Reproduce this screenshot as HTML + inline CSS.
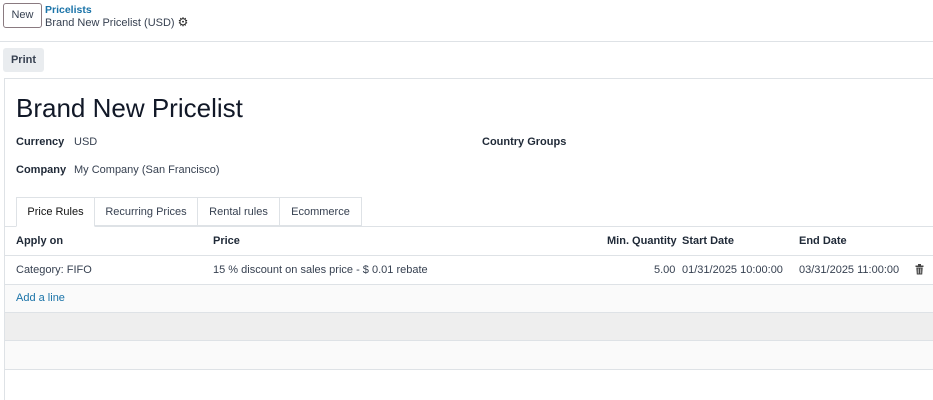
<!DOCTYPE html>
<html><head><style>
*{box-sizing:border-box;margin:0;padding:0}
body{width:933px;height:400px;overflow:hidden;background:#fff;font-family:"Liberation Sans","DejaVu Sans",sans-serif;font-size:11px;color:#374151;position:relative}
.a{position:absolute;white-space:nowrap}
b{font-weight:bold;color:#1f2937}
</style></head><body>
<div class="a" style="left:3px;top:3px;width:39px;height:25px;border:1px solid #8a7a80;border-radius:3px;text-align:center;line-height:23px;font-size:11px;color:#374151">New</div>
<div class="a" style="left:45px;top:4px;font-weight:bold;font-size:10.5px;color:#1a73a8">Pricelists</div>
<div class="a" style="left:45px;top:15px;font-size:11px;color:#374151">Brand New Pricelist (USD) <span style="font-size:12px;color:#222;font-weight:bold">⚙</span></div>
<div class="a" style="left:0;top:41px;width:933px;height:1px;background:#dee2e6"></div>
<div class="a" style="left:3px;top:48px;width:41px;height:24px;background:#e9ecef;border-radius:3px;text-align:center;line-height:24px;font-weight:bold;color:#374151">Print</div>
<div class="a" style="left:4px;top:78px;width:929px;height:322px;border:1px solid #dee2e6;border-right:none;border-bottom:none;background:#fff"></div>
<div class="a" style="left:16px;top:93px;font-size:26px;color:#111827">Brand New Pricelist</div>
<div class="a" style="left:16px;top:136px"><b>Currency</b></div>
<div class="a" style="left:74px;top:136px">USD</div>
<div class="a" style="left:482px;top:136px"><b>Country Groups</b></div>
<div class="a" style="left:16px;top:164px"><b>Company</b></div>
<div class="a" style="left:74px;top:164px">My Company (San Francisco)</div>
<div class="a" style="left:5px;top:226px;width:928px;height:1px;background:#dee2e6"></div>
<div class="a" style="left:16px;top:197px;width:79px;height:30px;border:1px solid #dee2e6;border-bottom:1px solid #fff;background:#fff;text-align:center;line-height:29px;color:#111">Price Rules</div>
<div class="a" style="left:95px;top:197px;width:103px;height:29px;border:1px solid #dee2e6;border-left:none;text-align:center;line-height:29px">Recurring Prices</div>
<div class="a" style="left:198px;top:197px;width:82px;height:29px;border:1px solid #dee2e6;border-left:none;text-align:center;line-height:29px">Rental rules</div>
<div class="a" style="left:280px;top:197px;width:82px;height:29px;border:1px solid #dee2e6;border-left:none;text-align:center;line-height:29px">Ecommerce</div>
<div class="a" style="left:16px;top:235px"><b>Apply on</b></div>
<div class="a" style="left:213px;top:235px"><b>Price</b></div>
<div class="a" style="left:607px;top:235px"><b>Min. Quantity</b></div>
<div class="a" style="left:682px;top:235px"><b>Start Date</b></div>
<div class="a" style="left:799px;top:235px"><b>End Date</b></div>
<div class="a" style="left:5px;top:255px;width:928px;height:1px;background:#dee2e6"></div>
<div class="a" style="left:16px;top:264px">Category: FIFO</div>
<div class="a" style="left:213px;top:264px">15 % discount on sales price - $ 0.01 rebate</div>
<div class="a" style="left:654px;top:264px">5.00</div>
<div class="a" style="left:682px;top:264px">01/31/2025 10:00:00</div>
<div class="a" style="left:799px;top:264px">03/31/2025 11:00:00</div>
<svg class="a" style="left:915px;top:264px" width="9" height="11" viewBox="0 0 9 11"><rect x="0.5" y="1.5" width="8" height="1.5" fill="#444"/><rect x="3" y="0" width="3" height="1.5" fill="#444"/><path d="M1.3 3.5h6.4l-.5 7h-5.4z" fill="#444"/><path d="M3.2 4.5v5M5.8 4.5v5" stroke="#fff" stroke-width=".7"/></svg>
<div class="a" style="left:5px;top:284px;width:928px;height:1px;background:#dee2e6"></div>
<div class="a" style="left:5px;top:285px;width:928px;height:27px;background:#fafafa"></div>
<div class="a" style="left:16px;top:292px;color:#1a73a8">Add a line</div>
<div class="a" style="left:5px;top:312px;width:928px;height:29px;background:#eeeeee;border-top:1px solid #dee2e6;border-bottom:1px solid #dee2e6"></div>
<div class="a" style="left:5px;top:341px;width:928px;height:29px;background:#fafafa;border-bottom:1px solid #dee2e6"></div>
</body></html>
